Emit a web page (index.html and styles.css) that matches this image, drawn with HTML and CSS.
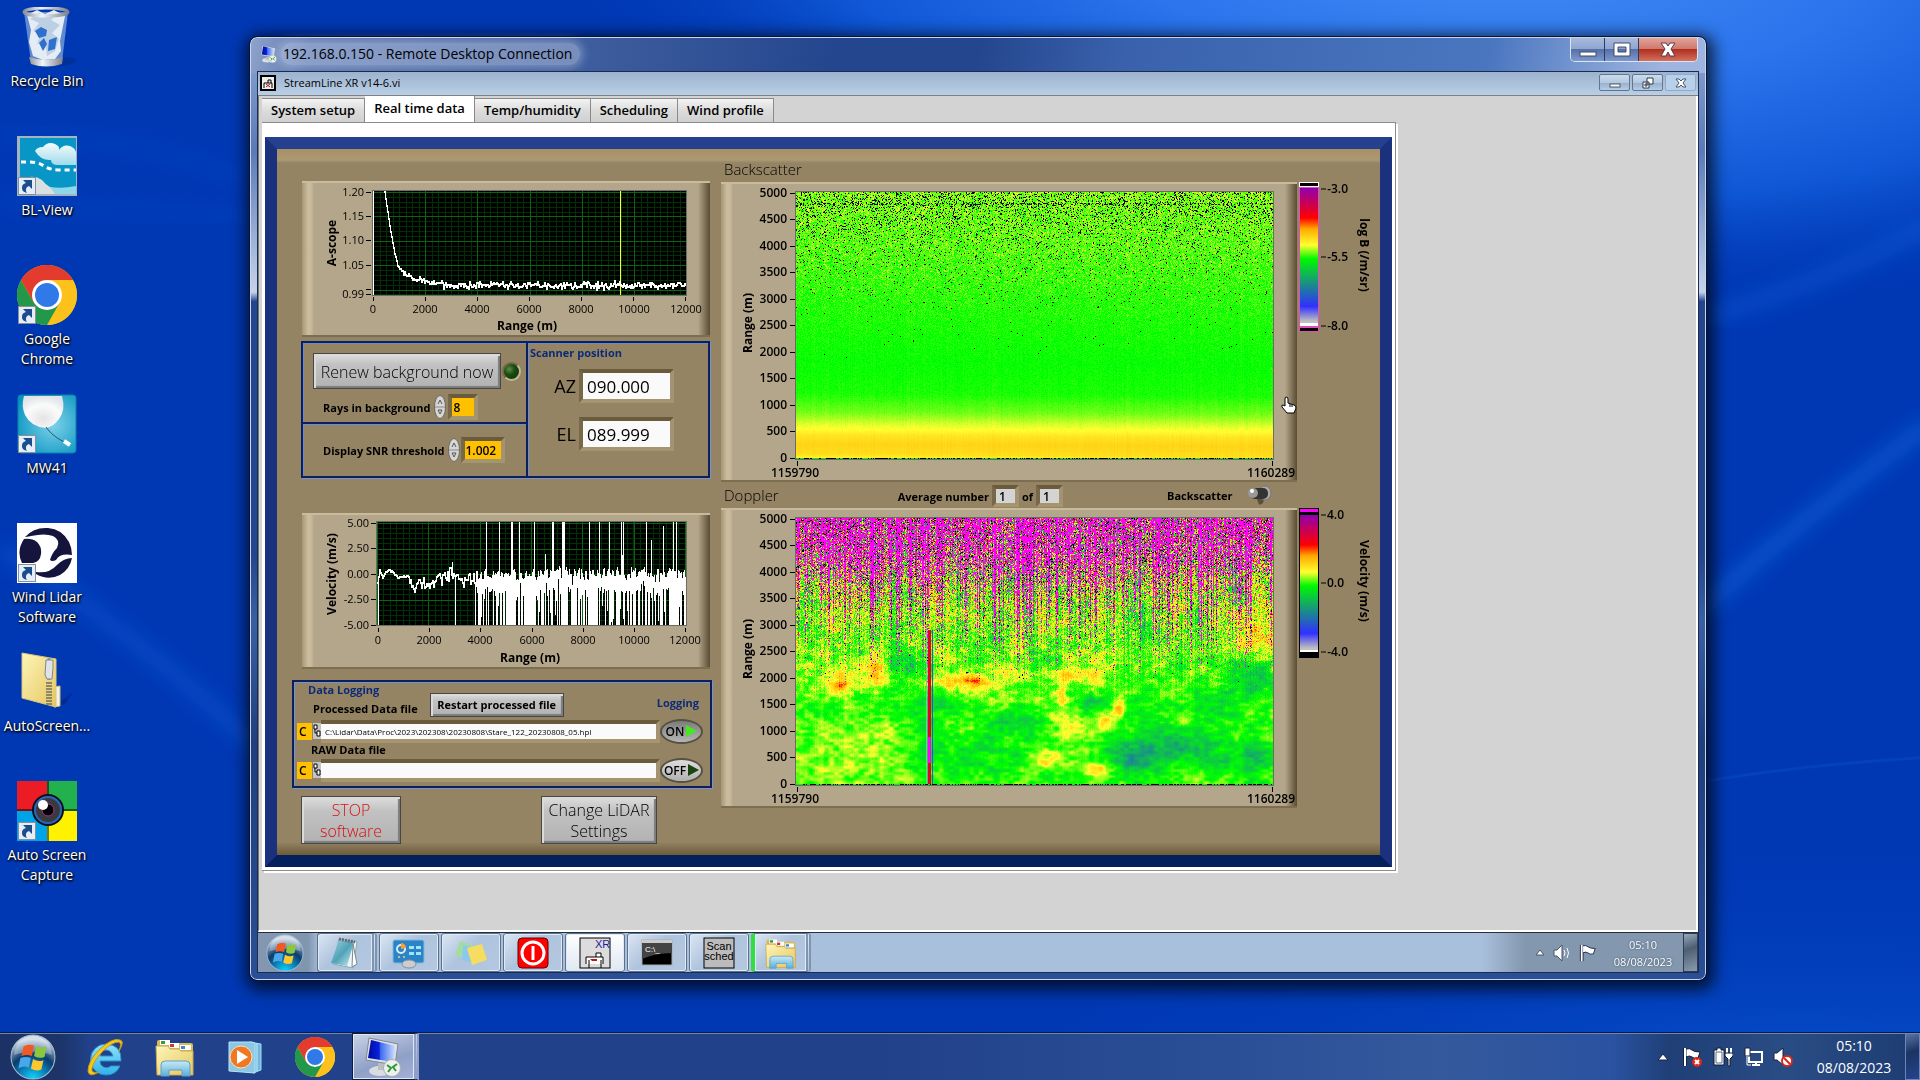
FILE: index.html
```html
<!DOCTYPE html>
<html lang="en">
<head>
    <meta charset="UTF-8">
    <meta name="viewport" content="width=device-width, initial-scale=1.0">
    <title>192.168.0.150 - Remote Desktop Connection</title>
    <link rel="stylesheet" href="styles.css">
</head>
<body>
    <!-- Shared icons -->
    <svg class="sprites" aria-hidden="true">
        <defs>
            <linearGradient id="gPaper" x1="0" y1="0" x2="1" y2="1"><stop offset="0" stop-color="#fdf6b8"/><stop offset="1" stop-color="#e6c660"/></linearGradient>
            <linearGradient id="gClip" x1="0" y1="0" x2="0" y2="1"><stop offset="0" stop-color="#c9e9f6"/><stop offset="1" stop-color="#5aaedb"/></linearGradient>
            <linearGradient id="gScreen" x1="0" y1="0" x2="1" y2="0"><stop offset="0" stop-color="#000a9c"/><stop offset="0.4" stop-color="#0a22e0"/><stop offset="0.45" stop-color="#3f6cf0"/><stop offset="1" stop-color="#d4e4fb"/></linearGradient>
            <radialGradient id="gOrb" cx="0.5" cy="1" r="0.9"><stop offset="0" stop-color="#12d6ff"/><stop offset="0.35" stop-color="#0b7fb8"/><stop offset="0.62" stop-color="#0a3c6e"/><stop offset="0.8" stop-color="#5b7b9b"/><stop offset="1" stop-color="#c3d3e2"/></radialGradient>
            <radialGradient id="gBalloon" cx="0.5" cy="0.7" r="0.7"><stop offset="0" stop-color="#e4e4e6"/><stop offset="0.6" stop-color="#fbfbfb"/><stop offset="1" stop-color="#dfe5e8"/></radialGradient>
            <radialGradient id="gMw" cx="0.6" cy="0.5" r="0.7"><stop offset="0" stop-color="#7fd2ea"/><stop offset="1" stop-color="#0894c0"/></radialGradient>
            <linearGradient id="gCloud" x1="0" y1="0" x2="0" y2="1"><stop offset="0" stop-color="#f4fcfd"/><stop offset="1" stop-color="#9fdbea"/></linearGradient>
            <linearGradient id="gMetal" x1="0" y1="0" x2="1" y2="0"><stop offset="0" stop-color="#8d9299"/><stop offset="0.4" stop-color="#f3f5f7"/><stop offset="1" stop-color="#7d828a"/></linearGradient>
            <linearGradient id="gPad" x1="0" y1="0" x2="1" y2="1"><stop offset="0" stop-color="#9fd3e0"/><stop offset="0.5" stop-color="#4fa3b8"/><stop offset="1" stop-color="#d5edf2"/></linearGradient>
            <linearGradient id="gE" x1="0" y1="0" x2="0" y2="1"><stop offset="0" stop-color="#8fe3fb"/><stop offset="1" stop-color="#2fb2ea"/></linearGradient>
        </defs>
        <symbol id="arrow" viewBox="0 0 18 18">
            <rect x="0.5" y="0.5" width="17" height="17" fill="#e3eef8" stroke="#8a9099"/>
            <path d="M5 3h9v9l-3-3c-3 1-4 4-2 7-4-1-5-3-5-5 0-3 1-4 4-5z" fill="#1c4c8c"/>
        </symbol>
        <symbol id="chrome" viewBox="0 0 60 60">
            <circle cx="30" cy="30" r="30" fill="#fbc116"/>
            <path d="M56 15H30L36 42 30 60A30 30 0 0 0 56 15z" fill="#fcc21b"/>
            <path d="M4 15A30 30 0 0 0 30 60L43 37 30 42 17 38z" fill="#23974a"/>
            <path d="M4 15L17 38 30 30V15H56A30 30 0 0 0 4 15z" fill="#e33b2e"/>
            <circle cx="30" cy="30" r="15" fill="#fff"/>
            <circle cx="30" cy="30" r="12" fill="#2f79e8"/>
        </symbol>
        <symbol id="orb" viewBox="0 0 44 44">
            <circle cx="22" cy="22" r="21" fill="url(#gOrb)" stroke="#a9bdd2"/>
            <path d="M4 20a18 18 0 0 1 36 0c-10-4-24-4-36 0z" fill="#fff" opacity="0.3"/>
            <path d="M13 12q4-3 10-1l-2 10q-5-2-10 0z" fill="#f05a22"/>
            <path d="M25 12q5 2 10 0l-2 10q-5 2-10-1z" fill="#8cc83c"/>
            <path d="M10 23q5-2 10 0l-2 9q-5-2-10 1z" fill="#4aa8e8"/>
            <path d="M22 24q5 3 10 1l-2 9q-5 2-10-1z" fill="#fcc82c"/>
        </symbol>
        <symbol id="explorer" viewBox="0 0 40 40">
            <path d="M2 5q0-2 2-2h8l2 3h22q2 0 2 2v6H2z" fill="#d9b95a"/>
            <path d="M5 3h10v5H5zM14 6h10v5H14zM25 8h11v5H25z" fill="#fff"/>
            <path d="M6 4h4v3H6z" fill="#3a9a3a"/><path d="M15 7h4v3h-4z" fill="#d03a2a"/><path d="M26 9h4v3h-4z" fill="#3a8ad0"/>
            <path d="M1 9h12l2 3h9l2 2h12v24H2z" fill="url(#gPaper)" stroke="#c9a850"/>
            <path d="M6 39V28q0-4 4-4h21q4 0 4 4v11h-8v-6H14v6z" fill="url(#gClip)" stroke="#5da2c6"/>
        </symbol>
        <symbol id="rdp" viewBox="0 0 40 40">
            <ellipse cx="16" cy="34" rx="11" ry="5" fill="#d9dce0"/>
            <path d="M14 26h6v7h-6z" fill="#b9bec6"/>
            <path d="M5 1l29 6-3 21L2 23z" fill="#dfe3e8" stroke="#7f868f"/>
            <path d="M7 3l25 6-3 16L4 21z" fill="url(#gScreen)"/>
            <circle cx="28" cy="31" r="8.500" fill="#eef1ef" stroke="#a9b0ab"/>
            <path d="M23 28l4 3-3 4M33 27l-4 3 3 4" stroke="#2f9a34" stroke-width="2" fill="none"/>
        </symbol>
        <symbol id="flag" viewBox="0 0 18 20">
            <path d="M2 1v18" stroke="#14233f" stroke-width="4"/>
            <path d="M3 2q4-1 6 1t8 2l-2 6q-4 1-6-1t-6 0z" fill="#fff" stroke="#14233f"/>
            <path d="M2 1v18" stroke="#fff" stroke-width="2"/>
        </symbol>
        <symbol id="spin" viewBox="0 0 12 24">
            <ellipse cx="6" cy="12" rx="5.500" ry="11.500" fill="#d6d6d6" stroke="#6f6a60"/>
            <path d="M1 12h10" stroke="#8a8a8a"/>
            <path d="M4 9l2-4 2 4M4 15h4l-2 4z" fill="none" stroke="#555"/>
        </symbol>
        <symbol id="path" viewBox="0 0 8 16">
            <rect width="8" height="16" fill="#c4c4c4"/>
            <path d="M1 2h3v4H1zM4 8h3v5H4zM2 6v4h2" fill="#fff" stroke="#000"/>
        </symbol>
    </svg>

    <main class="desktop">
        <svg class="wallpaper" viewBox="0 0 1920 1080" preserveAspectRatio="none" aria-hidden="true">
            <defs>
                <radialGradient id="wTop" gradientUnits="userSpaceOnUse" cx="0" cy="0" r="1" gradientTransform="translate(1480 -70) rotate(4) scale(980 380)">
                    <stop offset="0" stop-color="#4590f8"/><stop offset="0.4" stop-color="#2b74ec"/><stop offset="0.7" stop-color="#0f57d6"/><stop offset="1" stop-color="#0038b4" stop-opacity="0"/>
                </radialGradient>
                <radialGradient id="wBottom" gradientUnits="userSpaceOnUse" cx="0" cy="0" r="1" gradientTransform="translate(1800 1150) scale(900 330)">
                    <stop offset="0" stop-color="#0a5ad8"/><stop offset="1" stop-color="#0038b4" stop-opacity="0"/>
                </radialGradient>
                <filter id="soft"><feGaussianBlur stdDeviation="9"/></filter>
            </defs>
            <rect width="1920" height="1080" fill="#0038b4"/>
            <rect width="1920" height="1080" fill="url(#wTop)"/>
            <rect width="1920" height="1080" fill="url(#wBottom)"/>
            <path d="M0 550Q120 620 260 750" fill="none" stroke="#0a58d4" stroke-width="16" opacity="0.5" filter="url(#soft)"/>
            <path d="M0 134Q130 136 250 180M0 200Q120 215 260 215" fill="none" stroke="#0a52d0" stroke-width="10" opacity="0.3" filter="url(#soft)"/>
            <path d="M1700 610Q1800 520 1930 424" fill="none" stroke="#0a60d8" stroke-width="18" opacity="0.6" filter="url(#soft)"/>
            <path d="M1700 318Q1810 290 1930 225" fill="none" stroke="#0a5cd8" stroke-width="20" opacity="0.4" filter="url(#soft)"/>
            <path d="M1700 782Q1800 765 1930 757" fill="none" stroke="#0c58d0" stroke-width="3" opacity="0.3"/>
        </svg>

        <nav class="icons">
            <a class="icon" href="#">
                <svg width="60" height="60" viewBox="0 0 60 60">
                    <path d="M46 50q10 0 14 3-4 6-18 6z" fill="#002a80" opacity="0.5"/>
                    <path d="M7 5h44l-6 50q-16 6-31 0z" fill="#7fa6dc" opacity="0.75"/>
                    <path d="M10 8l10-5 8 4 9-4 11 6-2 10-3 15 1 10-6 8-12 1-10-4-4-14 2-12z" fill="#e4edf6"/>
                    <path d="M13 12l9 4-6 8 8 3-4 10 8-2 2 14 8-5 4-12-7-6 8-8-9-5 6-6-12 3-6-4z" fill="#bccfe3"/>
                    <path d="M18 24l6-4 6 3-1 6-7 2zM22 36l5-5 3 6-4 7zM32 33l8-3-2 12-7 2z" fill="#2e6fd0"/>
                    <path d="M12 50q16 6 34 0l-1 7q-16 5-31 0z" fill="url(#gMetal)"/>
                    <ellipse cx="29" cy="5" rx="22" ry="4" fill="none" stroke="url(#gMetal)" stroke-width="3"/>
                </svg>
                <span>Recycle Bin</span>
            </a>
            <a class="icon" href="#">
                <svg width="60" height="60" viewBox="0 0 60 60">
                    <rect width="60" height="60" fill="#a4b4c0"/>
                    <rect x="3" y="2" width="56" height="56" fill="#0796c6"/>
                    <path d="M18 15q2-4 8-4 5-6 12-3 5 2 4 6 4-6 11-4 5 2 6 6v13H41q-7 0-7-5-10 1-16-9z" fill="url(#gCloud)"/>
                    <path d="M4 26h9q8 0 14 4t16 4h16" stroke="#fff" stroke-width="3" stroke-dasharray="5 4" fill="none"/>
                    <path d="M3 45q12-8 22-1 7 9 16 9v5H3z" fill="#dadfe2"/>
                    <path d="M33 51q12 2 26-1v8H38z" fill="#8fd6e8"/>
                    <use href="#arrow" x="1" y="41" width="18" height="18"/>
                </svg>
                <span>BL-View</span>
            </a>
            <a class="icon" href="#">
                <svg width="60" height="60" viewBox="0 0 60 60">
                    <use href="#chrome" width="60" height="60"/>
                    <use href="#arrow" x="1" y="41" width="18" height="18"/>
                </svg>
                <span>Google<br>Chrome</span>
            </a>
            <a class="icon" href="#">
                <svg width="60" height="60" viewBox="0 0 60 60">
                    <rect x="1" y="1" width="58" height="58" rx="3" fill="url(#gMw)" stroke="#0784ac"/>
                    <path d="M7 2h38q4 14-3 23-6 8-13 9-15-1-21-13-4-9-1-19z" fill="url(#gBalloon)"/>
                    <path d="M29 33q5 8 18 15" stroke="#2a5a70" fill="none"/>
                    <path d="M47 47l6 4" stroke="#fff" stroke-width="4"/>
                    <use href="#arrow" x="1" y="41" width="18" height="18"/>
                </svg>
                <span>MW41</span>
            </a>
            <a class="icon" href="#">
                <svg width="60" height="60" viewBox="0 0 60 60">
                    <rect width="60" height="60" fill="#fff"/>
                    <path d="M8 14Q17 4 31 5q14 1 21 14 3 6 3 13-12-2-16 5-4 2-6 0 2-7 7-12 4-8-4-12-8-3-22 0-5 1-6 1z" fill="#14143c"/>
                    <path d="M7 16q8-1 13 3 5 5 4 12-1 8-8 9H5Q-1 28 7 16z" fill="#14143c"/>
                    <path d="M19 49q13 2 21-7 7-7 15-7-2 11-12 17-12 6-24-1z" fill="#14143c"/>
                    <use href="#arrow" x="1" y="41" width="18" height="18"/>
                </svg>
                <span>Wind Lidar<br>Software</span>
            </a>
            <a class="icon" href="#">
                <svg width="60" height="60" viewBox="0 0 60 60">
                    <path d="M38 54l18-14-8 12z" fill="#00247c" opacity="0.6"/>
                    <path d="M36 35l7-1v20l-6 1z" fill="#f0f2f4" stroke="#d8b858"/>
                    <path d="M5 1l34 6v48L5 46z" fill="url(#gPaper)" stroke="#d9c47a"/>
                    <path d="M32 30v24" stroke="#8d8668" stroke-width="6" stroke-dasharray="2 1"/>
                    <path d="M32 6v22" stroke="#8f959c" stroke-width="3"/>
                    <path d="M29 8h7v8l-1 11h-5l-2-4z" fill="#dfe3e7" stroke="#80868c"/>
                </svg>
                <span>AutoScreen...</span>
            </a>
            <a class="icon" href="#">
                <svg width="60" height="60" viewBox="0 0 60 60">
                    <rect width="30" height="30" fill="#ec1c24"/><rect x="30" width="30" height="30" fill="#22b14c"/>
                    <rect y="30" width="30" height="30" fill="#00a2e8"/><rect x="30" y="30" width="30" height="30" fill="#fff200"/>
                    <path d="M31 0v60M0 29h60" stroke="#000"/>
                    <circle cx="31" cy="29" r="15" fill="#3a3a3e" stroke="#081020" stroke-width="2"/>
                    <circle cx="31" cy="29" r="13" fill="none" stroke="#2a66b8" stroke-width="2"/>
                    <circle cx="31" cy="29" r="6" fill="#000" stroke="#a0308c"/>
                    <circle cx="26" cy="24" r="5" fill="#fff"/>
                    <use href="#arrow" x="1" y="41" width="18" height="18"/>
                </svg>
                <span>Auto Screen<br>Capture</span>
            </a>
        </nav>

        <section class="window">
            <header class="titlebar">
                <svg width="18" height="20" viewBox="0 0 40 40"><use href="#rdp"/></svg>
                <h1>192.168.0.150 - Remote Desktop Connection</h1>
                <div class="win-buttons">
                    <button aria-label="Minimize"><svg width="18" height="16" viewBox="0 0 18 16"><rect x="1" y="10" width="16" height="4" fill="#fff" stroke="#3e4c68"/></svg></button>
                    <button aria-label="Maximize"><svg width="18" height="16" viewBox="0 0 18 16"><path d="M1 1h16v13H1zM5 5v5h8V5z" fill="#fff" fill-rule="evenodd" stroke="#3e4c68"/></svg></button>
                    <button class="close" aria-label="Close"><svg width="18" height="16" viewBox="0 0 18 16"><path d="M2 1h5l2 3 2-3h5l-4 6 4 7h-5l-2-4-2 4H2l4-7z" fill="#fff" stroke="#5a3a48"/></svg></button>
                </div>
            </header>

            <div class="client">
                <div class="vi-bar">
                    <svg width="16" height="16" viewBox="0 0 16 16"><path d="M1 1h14v14H1z" fill="#eee" stroke="#000" stroke-width="2"/><path d="M4 13V8h8v5M8 8V5h3v3" fill="none" stroke="#000"/><path d="M6 12l4-3M6 9l4 3" stroke="#c01818"/></svg>
                    <h2>StreamLine XR v14-6.vi</h2>
                    <button aria-label="Minimize panel"><svg width="12" height="12" viewBox="0 0 12 12"><rect x="1" y="7" width="10" height="3" fill="#fff" stroke="#4a5664"/></svg></button>
                    <button aria-label="Restore panel"><svg width="12" height="12" viewBox="0 0 12 12"><path d="M5 1h6v6H5zM1 5h6v6H1z" fill="#fff" stroke="#2f3a48"/><path d="M3 7h2v2H3z" fill="none" stroke="#2f3a48"/></svg></button>
                    <button aria-label="Close panel"><svg width="12" height="12" viewBox="0 0 12 12"><path d="M1 2h3l2 2 2-2h3L8 6l3 4H8L6 8l-2 2H1l3-4z" fill="#fff" stroke="#4a5664"/></svg></button>
                </div>

                <div class="workspace">
                    <div class="tabs" role="tablist">
                        <button role="tab">System setup</button>
                        <button role="tab" class="active" aria-selected="true">Real time data</button>
                        <button role="tab">Temp/humidity</button>
                        <button role="tab">Scheduling</button>
                        <button role="tab">Wind profile</button>
                    </div>

                    <div class="page">
                        <div class="panel">
                            <div class="left">
                                <figure class="plot scope">
                                    <canvas id="ascope" width="313" height="104"></canvas>
                                    <svg viewBox="0 0 408 156" class="axes thin">
                                        <g class="y">
                                            <text x="62" y="15">1.20</text><text x="62" y="39">1.15</text><text x="62" y="63">1.10</text><text x="62" y="88">1.05</text><text x="62" y="117">0.99</text>
                                        </g>
                                        <g class="x">
                                            <text x="71" y="132">0</text><text x="123" y="132">2000</text><text x="175" y="132">4000</text><text x="227" y="132">6000</text><text x="279" y="132">8000</text><text x="332" y="132">10000</text><text x="384" y="132">12000</text>
                                        </g>
                                        <path d="M64 11h5M64 35h5M64 59h5M64 84h5M64 108h5M64 113h5M71 116v4M123 116v4M175 116v4M227 116v4M279 116v4M331 116v4M383 116v4"/>
                                        <text class="name" x="225" y="149">Range (m)</text>
                                        <text class="name" transform="translate(34 62) rotate(-90)">A-scope</text>
                                    </svg>
                                </figure>

                                <div class="controls">
                                    <div class="cell background">
                                        <div class="row">
                                            <button class="btn big">Renew background now</button>
                                            <span class="led"></span>
                                        </div>
                                        <div class="row field">
                                            <label for="rays">Rays in background</label>
                                            <button class="spin" aria-label="Change rays"><svg width="12" height="24"><use href="#spin"/></svg></button>
                                            <input id="rays" class="amber short" value="8">
                                        </div>
                                    </div>
                                    <div class="cell snr">
                                        <div class="row field">
                                            <label for="snr">Display SNR threshold</label>
                                            <button class="spin" aria-label="Change threshold"><svg width="12" height="24"><use href="#spin"/></svg></button>
                                            <input id="snr" class="amber" value="1.002">
                                        </div>
                                    </div>
                                    <div class="cell scanner">
                                        <h3>Scanner position</h3>
                                        <div class="angle"><label for="az">AZ</label><input id="az" value="090.000" readonly></div>
                                        <div class="angle"><label for="el">EL</label><input id="el" value="089.999" readonly></div>
                                    </div>
                                </div>

                                <figure class="plot scope">
                                    <canvas id="velocity" class="velocity" width="309" height="103"></canvas>
                                    <svg viewBox="0 0 408 156" class="axes thin">
                                        <g class="y">
                                            <text x="67" y="14">5.00</text><text x="67" y="39">2.50</text><text x="67" y="65">0.00</text><text x="67" y="90">-2.50</text><text x="67" y="116">-5.00</text>
                                        </g>
                                        <g class="x">
                                            <text x="76" y="131">0</text><text x="127" y="131">2000</text><text x="178" y="131">4000</text><text x="230" y="131">6000</text><text x="281" y="131">8000</text><text x="332" y="131">10000</text><text x="383" y="131">12000</text>
                                        </g>
                                        <path d="M69 10h5M69 35h5M69 61h5M69 86h5M69 112h5M76 115v4M127 115v4M178 115v4M230 115v4M281 115v4M332 115v4M383 115v4"/>
                                        <text class="name" x="228" y="149">Range (m)</text>
                                        <text class="name" transform="translate(34 61) rotate(-90)">Velocity (m/s)</text>
                                    </svg>
                                </figure>

                                <div class="logging">
                                    <h3>Data Logging</h3>
                                    <div class="log-head">
                                        <label for="proc">Processed Data file</label>
                                        <button class="btn restart">Restart processed file</button>
                                        <h3>Logging</h3>
                                    </div>
                                    <div class="log-row">
                                        <span class="drive">C</span>
                                        <svg width="8" height="16"><use href="#path"/></svg>
                                        <input id="proc" value="C:\Lidar\Data\Proc\2023\202308\20230808\Stare_122_20230808_05.hpl">
                                        <button class="toggle on">ON<i></i></button>
                                    </div>
                                    <label class="raw" for="raw">RAW Data file</label>
                                    <div class="log-row">
                                        <span class="drive">C</span>
                                        <svg width="8" height="16"><use href="#path"/></svg>
                                        <input id="raw" value="">
                                        <button class="toggle">OFF<i></i></button>
                                    </div>
                                </div>

                                <div class="actions">
                                    <button class="btn big stop">STOP<br>software</button>
                                    <button class="btn big settings">Change LiDAR<br>Settings</button>
                                </div>
                            </div>

                            <div class="right">
                                <div class="caption"><h2>Backscatter</h2></div>
                                <div class="map-row">
                                    <figure class="plot map">
                                        <canvas id="backscatter" width="477" height="267"></canvas>
                                        <svg viewBox="0 0 576 300" class="axes">
                                            <g class="y">
                                                <text x="66" y="15">5000</text><text x="66" y="41">4500</text><text x="66" y="68">4000</text><text x="66" y="94">3500</text><text x="66" y="121">3000</text><text x="66" y="147">2500</text><text x="66" y="174">2000</text><text x="66" y="200">1500</text><text x="66" y="227">1000</text><text x="66" y="253">500</text><text x="66" y="280">0</text>
                                            </g>
                                            <g class="x"><text x="74" y="295">1159790</text><text x="550" y="295">1160289</text></g>
                                            <path d="M69 11h5M69 37h5M69 64h5M69 90h5M69 117h5M69 143h5M69 170h5M69 196h5M69 223h5M69 249h5M69 276h5M76 279v5M551 279v5"/>
                                            <text class="name" transform="translate(31 141) rotate(-90)">Range (m)</text>
                                        </svg>
                                    </figure>
                                    <svg class="scale" width="81" height="160" viewBox="0 0 81 160">
                                        <defs>
                                            <linearGradient id="ramp" x1="0" y1="0" x2="0" y2="1">
                                                <stop offset="0" stop-color="#9000b0"/><stop offset="0.220" stop-color="#ff0000"/><stop offset="0.300" stop-color="#ffa800"/><stop offset="0.420" stop-color="#ffff30"/><stop offset="0.520" stop-color="#00f800"/><stop offset="0.870" stop-color="#3030ff"/><stop offset="0.980" stop-color="#c0c0c0"/>
                                            </linearGradient>
                                        </defs>
                                        <rect width="20" height="150" fill="#e04fc0"/>
                                        <rect width="20" height="5" fill="#fff"/><rect x="1" y="1" width="18" height="3"/>
                                        <rect x="1" y="6" width="18" height="136" fill="url(#ramp)"/>
                                        <rect x="1" y="141" width="18" height="3" fill="#fff"/><rect x="1" y="146" width="18" height="3"/>
                                        <path d="M22 7h5M22 75h5M22 144h5" stroke="#000"/>
                                        <g class="ticks"><text x="49" y="11">-3.0</text><text x="49" y="79">-5.5</text><text x="49" y="148">-8.0</text></g>
                                        <text class="name" transform="translate(61 73) rotate(90)">log B (/m/sr)</text>
                                    </svg>
                                </div>

                                <div class="caption doppler">
                                    <h2>Doppler</h2>
                                    <div class="average">
                                        <label for="avg">Average number</label>
                                        <input id="avg" value="1" readonly>
                                        <label for="avgOf">of</label>
                                        <input id="avgOf" value="1" readonly>
                                    </div>
                                    <label for="mode">Backscatter</label>
                                    <button id="mode" class="lever" aria-label="Backscatter">
                                        <svg width="26" height="22" viewBox="0 0 26 22">
                                            <path d="M10 12h9l-2 7q-4 4-5-1z" fill="#5c5038"/>
                                            <ellipse cx="19" cy="9" rx="6" ry="7" fill="#a9a9a9" stroke="#777"/>
                                            <rect x="4" y="4" width="18" height="11" rx="5" fill="#333"/>
                                            <circle cx="7" cy="9" r="5" fill="#999"/><circle cx="6" cy="7" r="2" fill="#fff"/>
                                        </svg>
                                    </button>
                                </div>
                                <div class="map-row">
                                    <figure class="plot map">
                                        <canvas id="doppler" width="477" height="267"></canvas>
                                        <svg viewBox="0 0 576 300" class="axes">
                                            <g class="y">
                                                <text x="66" y="15">5000</text><text x="66" y="41">4500</text><text x="66" y="68">4000</text><text x="66" y="94">3500</text><text x="66" y="121">3000</text><text x="66" y="147">2500</text><text x="66" y="174">2000</text><text x="66" y="200">1500</text><text x="66" y="227">1000</text><text x="66" y="253">500</text><text x="66" y="280">0</text>
                                            </g>
                                            <g class="x"><text x="74" y="295">1159790</text><text x="550" y="295">1160289</text></g>
                                            <path d="M69 11h5M69 37h5M69 64h5M69 90h5M69 117h5M69 143h5M69 170h5M69 196h5M69 223h5M69 249h5M69 276h5M76 279v5M551 279v5"/>
                                            <text class="name" transform="translate(31 141) rotate(-90)">Range (m)</text>
                                        </svg>
                                    </figure>
                                    <svg class="scale" width="81" height="160" viewBox="0 0 81 160">
                                        <rect width="20" height="150"/>
                                        <rect x="1" y="1" width="18" height="3" fill="#ff00ff"/>
                                        <rect x="1" y="7" width="18" height="136" fill="url(#ramp)"/>
                                        <rect x="1" y="142" width="18" height="2" fill="#fff"/>
                                        <path d="M22 7h5M22 75h5M22 144h5" stroke="#000"/>
                                        <g class="ticks"><text x="45" y="11">4.0</text><text x="45" y="79">0.0</text><text x="49" y="148">-4.0</text></g>
                                        <text class="name" transform="translate(61 73) rotate(90)">Velocity (m/s)</text>
                                    </svg>
                                </div>
                            </div>
                        </div>
                    </div>
                </div>

                <footer class="remote-taskbar">
                    <button class="start" aria-label="Remote start"><svg width="38" height="38"><use href="#orb"/></svg></button>
                    <button class="task stacked" aria-label="Notepad">
                        <svg width="32" height="34" viewBox="0 0 32 34"><path d="M10 3l18 3-4 26-20-4z" fill="#eef4f6" stroke="#8aa"/><path d="M10 4l15 2-7 24L2 27z" fill="url(#gPad)"/><path d="M10 3l16 3" stroke="#667" stroke-width="3" stroke-dasharray="2 1"/><path d="M24 8l4 20-5 3z" fill="#fff" stroke="#7a8a90"/></svg>
                    </button>
                    <button class="task" aria-label="Control Panel">
                        <svg width="34" height="32" viewBox="0 0 34 32"><rect x="1" y="3" width="31" height="23" rx="2" fill="#2b83c8" stroke="#7fb8e0"/><circle cx="9" cy="12" r="4" fill="none" stroke="#d8eefc" stroke-width="2"/><path d="M9 12V6a5 5 0 0 1 5 5z" fill="#f6a030"/><path d="M17 9h5v3h-5zM24 9h5v3h-5zM17 15h5v3h-5zM24 15h5v3h-5z" fill="#9fe4f8"/><circle cx="7" cy="20" r="1" fill="#fc6"/><circle cx="12" cy="20" r="1" fill="#fc6"/><ellipse cx="17" cy="27" rx="7" ry="4" fill="#c9ced4" stroke="#8b9096"/></svg>
                    </button>
                    <button class="task" aria-label="Sticky Notes">
                        <svg width="34" height="32" viewBox="0 0 34 32"><path d="M6 4l15 5-5 14L1 18z" fill="#a4dca0"/><path d="M9 8l15 3-3 15-13-3z" fill="#8cc8ee"/><path d="M13 11l15-4 5 16-15 5z" fill="#f6dc60"/></svg>
                    </button>
                    <button class="task" aria-label="Power">
                        <svg width="32" height="32" viewBox="0 0 32 32"><rect x="1" y="1" width="30" height="30" rx="4" fill="#f00" stroke="#600"/><circle cx="16" cy="16" r="11" fill="none" stroke="#fff" stroke-width="3"/><path d="M16 9v14" stroke="#fff" stroke-width="3"/></svg>
                    </button>
                    <button class="task current" aria-label="StreamLine XR">
                        <svg width="32" height="32" viewBox="0 0 32 32"><rect x="1" y="1" width="30" height="30" fill="#dcdcdc" stroke="#000"/><text class="glyph xr" x="16" y="11">XR</text><path d="M7 27V20h17v7M10 31v-8M22 31v-8M17 20v-4h5v4" fill="#fff" stroke="#000"/><path d="M11 22h7v2h-5z" fill="#c01818"/></svg>
                    </button>
                    <button class="task" aria-label="Command Prompt">
                        <svg width="32" height="28" viewBox="0 0 32 28"><rect x="1" y="1" width="30" height="25" fill="#000" stroke="#aaa"/><path d="M1 1h30v3H1z" fill="#ccc"/><path d="M1 4h30v10Q14 14 1 20z" fill="#444"/><text class="glyph cmd" x="4" y="13">C:\_</text></svg>
                    </button>
                    <button class="task" aria-label="Scan scheduler">
                        <svg width="32" height="32" viewBox="0 0 32 32"><rect x="1" y="1" width="30" height="30" fill="#bcbcbc" stroke="#000"/><text class="glyph" x="16" y="13">Scan</text><text class="glyph" x="16" y="23">sched</text></svg>
                    </button>
                    <button class="task stacked busy" aria-label="Explorer"><svg width="32" height="32"><use href="#explorer"/></svg></button>
                    <div class="tray">
                        <svg width="10" height="6" viewBox="0 0 10 6"><path d="M5 0l4 5H1z" fill="#fff" stroke="#4a5a70"/></svg>
                        <svg width="18" height="18" viewBox="0 0 18 18"><path d="M1 6h3l5-5v16l-5-5H1z" fill="#fff" stroke="#44546a"/><path d="M11 6q2 3 0 6M14 4q3 5 0 10" fill="none" stroke="#fff"/></svg>
                        <svg width="18" height="18"><use href="#flag"/></svg>
                        <time class="clock">05:10<br>08/08/2023</time>
                        <button class="show" aria-label="Show remote desktop"></button>
                    </div>
                </footer>
            </div>

            <svg class="pointer" width="16" height="18" viewBox="0 0 16 18" aria-hidden="true"><path d="M5 1q2 0 2 2v4l6 2q2 1 2 3l-2 5H6L1 11q-1-2 1-2l2 1V3q0-2 1-2z" fill="#fff" stroke="#000"/><path d="M9 8v3M11 9v2" stroke="#000"/></svg>
        </section>
    </main>

    <footer class="taskbar">
        <button class="start" aria-label="Start"><svg width="46" height="46"><use href="#orb"/></svg></button>
        <button class="pin" aria-label="Internet Explorer">
            <svg width="40" height="40" viewBox="0 0 40 40"><path d="M21 7a15 15 0 0 0 0 31q10 0 14-9h-9q-5 4-10-1-1-2-1-4h21Q37 8 21 7zm-6 12q1-6 6-6t7 6z" fill="url(#gE)" stroke="#2a90cc" fill-rule="evenodd"/><path d="M34 14Q40 4 35 3 28 0 15 12 3 24 3 34q1 7 11 1-8 2-7-4 2-8 11-17T34 5q3 1 0 9z" fill="#f6c820" stroke="#c89a10"/></svg>
        </button>
        <button class="pin" aria-label="Windows Explorer"><svg width="40" height="40"><use href="#explorer"/></svg></button>
        <button class="pin" aria-label="Media Player">
            <svg width="36" height="36" viewBox="0 0 36 36"><path d="M22 3l12 2v26l-8 3z" fill="#6fb8dc" stroke="#9fdcf0"/><path d="M26 4v29M30 4v28" stroke="#c4ecf8"/><path d="M2 3h23l3 1v30L2 32z" fill="#8cc8e4" stroke="#b8e4f4"/><circle cx="14" cy="18" r="11" fill="#f07820" stroke="#f8e0c8"/><path d="M10 11l11 7-11 7z" fill="#fff"/></svg>
        </button>
        <button class="pin" aria-label="Google Chrome"><svg width="40" height="40"><use href="#chrome"/></svg></button>
        <button class="pin running" aria-label="Remote Desktop"><svg width="40" height="40"><use href="#rdp"/></svg></button>
        <div class="tray">
            <svg width="12" height="8" viewBox="0 0 12 8"><path d="M6 1l5 6H1z" fill="#fff" stroke="#14233f"/></svg>
            <svg width="20" height="20" viewBox="0 0 20 20"><use href="#flag" width="18" height="20"/><circle cx="14" cy="15" r="5" fill="#d8281c"/><path d="M12 13l4 4M16 13l-4 4" stroke="#fff" stroke-width="2"/></svg>
            <svg width="20" height="20" viewBox="0 0 20 20"><path d="M1 3h3V1h4v2h3v15H1z" fill="#fff" stroke="#0c1a34"/><path d="M3 5h6v11H3z" fill="#fff" stroke="#5a6a84"/><path d="M14 1v5M18 1v5" stroke="#fff" stroke-width="2"/><path d="M12 6h8v3l-3 3v7h-2v-7l-3-3z" fill="#fff" stroke="#0c1a34"/></svg>
            <svg width="20" height="20" viewBox="0 0 20 20"><path d="M6 5h13v10H6z" fill="#2a4a80" stroke="#fff" stroke-width="2"/><path d="M9 18h8M13 15v3" stroke="#fff" stroke-width="2"/><path d="M2 1h5v8H2z" fill="#fff" stroke="#14233f"/><path d="M4 9v9h4" stroke="#fff" fill="none"/></svg>
            <svg width="20" height="20" viewBox="0 0 20 20"><path d="M1 6h3l6-5v17l-6-5H1z" fill="#fff" stroke="#14233f"/><circle cx="14" cy="14" r="5" fill="#fff" stroke="#d8281c" stroke-width="2"/><path d="M11 11l6 6" stroke="#d8281c" stroke-width="2"/></svg>
            <time class="clock">05:10<br>08/08/2023</time>
            <button class="show" aria-label="Show desktop"></button>
        </div>
    </footer>

    <script src="script.js"></script>
</body>
</html>
```

FILE: styles.css
```css
* {
    box-sizing: border-box;
}

body {
    margin: 0;
    height: 100vh;
    display: flex;
    flex-direction: column;
    overflow: hidden;
    background: #0038b4;
    font-family: 'Open Sans', 'Noto Sans', sans-serif;
    font-size: 12px;
    color: #000;
}

h1, h2, h3, figure {
    margin: 0;
    font-weight: normal;
}

button, input {
    font: inherit;
    color: inherit;
    margin: 0;
    padding: 0;
    border: none;
    background: none;
    border-radius: 0;
}

button {
    display: flex;
    align-items: center;
    justify-content: center;
}

svg {
    display: block;
    flex: none;
}

.sprites {
    position: absolute;
    width: 0;
    height: 0;
}

.desktop {
    position: relative;
    flex: 1;
    min-height: 0;
}

.wallpaper {
    position: absolute;
    width: 100%;
    height: 100vh;
}

/* Desktop shortcuts */
.icons {
    position: relative;
    width: 94px;
    padding-top: 7px;
    display: grid;
    grid-auto-rows: 129px;
}

.icon {
    display: flex;
    flex-direction: column;
    align-items: center;
    gap: 4px;
    color: #fff;
    font-size: 14px;
    line-height: 20px;
    text-align: center;
    text-decoration: none;
    text-shadow: 1px 1px 2px #000, 0 1px 3px #000;
}

/* Remote desktop window */
.window {
    position: absolute;
    top: 37px;
    right: 214px;
    bottom: 52px;
    left: 250px;
    display: flex;
    flex-direction: column;
    padding: 0 7px 7px;
    border: 1px solid #c4d6f2;
    border-radius: 7px;
    outline: 1px solid #0a1430;
    background:
        linear-gradient(100deg, #8fa3cb 0, #5b78b0 60px, #24468e 40%, #24468e 50%, #3a62ac 60%, #4a76c0 85%, #9fb4de 97%) top / 100% 35px no-repeat,
        linear-gradient(#8fa6d4, #5a7ab8 12%, #c6d2ea 27%, #24468e 28%, #24468e 55%, #3a60a4 62%, #1f3f7e 75%, #2b4f96);
    box-shadow: 2px 4px 16px 6px rgba(0, 0, 0, 0.7);
}

.titlebar {
    height: 34px;
    display: flex;
    align-items: flex-start;
    padding-left: 2px;
    gap: 3px;
}

.titlebar > svg {
    margin-top: 6px;
}

.titlebar h1 {
    flex: none;
    margin: 5px auto 0 0;
    padding: 0 8px 0 2px;
    font-size: 14px;
    line-height: 22px;
    border-radius: 11px;
    background: rgba(225, 232, 245, 0.35);
    box-shadow: 0 0 8px 3px rgba(225, 232, 245, 0.35);
}

.win-buttons {
    display: flex;
    height: 24px;
    border: 1px solid #dbe5f6;
    border-top: none;
    border-radius: 0 0 5px 5px;
    overflow: hidden;
}

.win-buttons button {
    width: 34px;
    border-right: 1px solid #2a3c64;
    background: linear-gradient(#a9badc, #8ea5d0 48%, #5571a8 50%, #7d98cc);
}

.win-buttons .close {
    width: 58px;
    border: none;
    background: linear-gradient(#e0a49c, #d0776a 48%, #b03020 50%, #d4705c);
}

.client {
    flex: 1;
    min-height: 0;
    display: flex;
    flex-direction: column;
    outline: 1px solid #1a2c50;
    background: #d3d3d3;
}

.vi-bar {
    height: 24px;
    display: flex;
    align-items: center;
    gap: 2px;
    padding: 0 2px 2px;
    background: linear-gradient(#9db3cd, #b9cfe8);
    border-bottom: 1px solid #808080;
}

.vi-bar h2 {
    margin: 0 auto 0 6px;
    font-size: 11px;
}

.vi-bar button {
    width: 31px;
    height: 17px;
    border: 1px solid #64768c;
    border-radius: 2px;
    background: linear-gradient(#cbdcee, #b4c9e0 50%, #98b0cc 52%, #b4cce6);
}

.vi-bar button:last-child {
    border-color: #93aac6;
    background: #b8d0ea;
}

.workspace {
    flex: 1;
    min-height: 0;
    overflow: hidden;
    padding-left: 3px;
    border-left: 1px solid #777;
    border-right: 2px solid #fff;
    border-bottom: 2px solid #fff;
}

.tabs {
    display: flex;
    height: 26px;
    align-items: flex-end;
}

.tabs button {
    height: 24px;
    padding: 0 9px 2px;
    font-size: 13px;
    font-weight: 600;
    border: 1px solid #8a8a8a;
    border-left: none;
    border-bottom: none;
    background: linear-gradient(#f3f3f3, #dcdcdc 50%, #d0d0d0);
}

.tabs .active {
    height: 26px;
    padding-bottom: 3px;
    background: #fff;
    border-top: none;
}

.page {
    width: fit-content;
    padding: 14px 3px 3px;
    background: #fff;
    border: 1px solid #8c8c8c;
    border-left: none;
    box-shadow: 2px 2px 0 #fff;
}

/* Front panel */
.panel {
    display: flex;
    gap: 9px;
    padding: 0 0 11px 15px;
    border-style: solid;
    border-width: 12px;
    border-color: #24408e #1a327e #04205c #1a327e;
    background: linear-gradient(#a98f68 0, #ab9972 11px, #948464 14px, #948464 calc(100% - 13px), #6c5a38);
}

.left {
    width: 420px;
    padding-top: 32px;
    display: flex;
    flex-direction: column;
}

.plot {
    display: grid;
    background:
        linear-gradient(90deg, #a49676 0, #cabc9c 6px, #c8ba9a 9px, transparent 12px) no-repeat,
        linear-gradient(270deg, #594d36 0, #6f6248 3px, transparent 12px) no-repeat,
        #b4a68a;
    border-top: 2px solid #c9bb9b;
    border-bottom: 2px solid #7c6e50;
}

.plot canvas {
    grid-area: 1 / 1;
    outline: 1px solid #6c6c60;
}

.axes {
    grid-area: 1 / 1;
    width: 100%;
    font-size: 12px;
    font-weight: 600;
}

.axes path {
    stroke: #000;
    shape-rendering: crispEdges;
}

.axes .y, .scale .ticks {
    text-anchor: end;
}

.axes .x, .name {
    text-anchor: middle;
}

.thin {
    font-size: 11px;
    font-weight: normal;
}

.name {
    font-size: 12px;
    font-weight: bold;
}

.scope {
    height: 156px;
    margin: 0 2px 0 10px;
}

.scope .axes {
    margin-top: -2px;
}

.scope canvas {
    margin: 8px 0 0 71px;
}

.scope .velocity {
    margin-top: 7px;
    margin-left: 75px;
}

.controls {
    margin: 4px 2px 35px 9px;
    display: grid;
    grid-template: 81px 54px / 225px 1fr;
    border: 1px solid #0a1f60;
    box-shadow: 1px 1px 0 #7c93c4;
}

.cell {
    border: 1px solid #0a1f60;
    box-shadow: inset 1px 1px 0 #6f8cc8;
}

.background {
    padding: 10px 0 0 10px;
}

.scanner {
    grid-area: 1 / 2 / 3 / 3;
    padding-left: 2px;
}

.row {
    display: flex;
    align-items: center;
}

.field {
    margin: 5px 0 0 10px;
    gap: 4px;
}

.snr .field {
    margin: 13px 0 0 20px;
    gap: 3px;
}

label, .restart {
    font-weight: bold;
    font-size: 11px;
}

h3 {
    color: #0c2a78;
    font-weight: bold;
    font-size: 11px;
    line-height: 17px;
}

.btn {
    border: 1px solid #474747;
    background: linear-gradient(#dedede, #c2c2c2 30%, #b2b2b2);
    box-shadow: inset 2px 2px 0 #dadada, inset -2px -2px 1px #7c7c7c;
    white-space: nowrap;
}

.big {
    height: 36px;
    width: 188px;
    padding-top: 2px;
    font-size: 16px;
    line-height: 21px;
    font-weight: 300;
}

.led {
    width: 19px;
    height: 19px;
    margin-left: 1px;
    border: 2px solid #75674a;
    border-right-color: #c4b595;
    border-bottom-color: #c4b595;
    border-radius: 50%;
    background: radial-gradient(circle at 35% 35%, #5c8c4c, #184c10 40%, #0c3008);
}

.amber, .angle input, .average input, .log-row input {
    border: 4px solid;
    border-color: #6a5b3d #a39372 #a6966f #77684a;
}

.amber {
    width: 44px;
    height: 26px;
    margin-left: -2px;
    padding-left: 1px;
    background: #ffc000 padding-box;
    font-weight: 600;
}

.short {
    width: 30px;
}

.angle {
    display: grid;
    grid-template-columns: 46px 95px;
    align-items: center;
    gap: 3px;
    margin-bottom: 14px;
}

.angle label {
    font-size: 18px;
    font-weight: normal;
    text-align: right;
}

.angle input {
    height: 34px;
    padding-left: 4px;
    background: #fafafa padding-box;
    font-size: 17px;
}

.scanner h3 {
    margin: 1px 0 8px;
}

.logging {
    margin-top: 11px;
    height: 108px;
    padding-left: 2px;
    border: 2px solid #0a1f60;
    box-shadow: inset 1px 1px 0 #7c93c4, 1px 1px 0 #7c93c4;
}

.logging > h3 {
    padding-left: 12px;
    line-height: 15px;
}

.log-head {
    display: flex;
    align-items: center;
    height: 23px;
    padding-left: 17px;
}

.restart {
    width: 134px;
    height: 24px;
    margin: -8px auto 0 12px;
}

.log-head h3 {
    padding: 0 11px 12px 0;
}

.log-row {
    display: flex;
    align-items: center;
    height: 22px;
}

.log-row .drive {
    width: 15px;
    height: 17px;
    margin: 0 1px 0 1px;
    padding-left: 2px;
    line-height: 17px;
    font-weight: 600;
    background: #ffc000;
}

.log-row input {
    flex: 1;
    min-width: 0;
    height: 23px;
    padding-left: 4px;
    border-left: none;
    background: #fafafa padding-box;
    font-size: 8px;
}

.toggle {
    width: 43px;
    height: 25px;
    margin: 0 7px 0 0;
    gap: 2px;
    border: 2px solid #55503f;
    border-radius: 50%;
    background: linear-gradient(#dedede, #b0b0b0);
    font-weight: 600;
}

.toggle.on {
    background: linear-gradient(#7c7c7c, #b4b4b4);
}

.toggle i {
    border-left: 11px solid #1c4410;
    border-top: 6px solid transparent;
    border-bottom: 6px solid transparent;
}

.toggle.on i {
    border-left-color: #48e820;
}

.raw {
    display: block;
    height: 17px;
    line-height: 16px;
    padding-left: 15px;
}

.actions {
    display: flex;
    gap: 140px;
    padding: 8px 0 0 9px;
}

.actions .big {
    height: 48px;
    width: 116px;
}

.actions .stop {
    width: 100px;
    color: #d81010;
}

.right {
    padding-top: 10px;
}

.caption {
    display: flex;
    align-items: flex-start;
    height: 23px;
}

.caption h2 {
    padding-left: 3px;
    font-size: 15px;
    font-weight: 300;
    line-height: 20px;
}

.doppler {
    height: 26px;
    align-items: center;
}

.average {
    display: flex;
    align-items: center;
    gap: 3px;
    margin: 2px 104px 0 119px;
}

.average input {
    width: 27px;
    height: 22px;
    padding-left: 3px;
    background: #d4d4d4 padding-box;
    font-weight: 600;
}

.lever {
    margin-left: 14px;
}

.map-row {
    display: flex;
    gap: 2px;
}

.map {
    width: 576px;
    height: 300px;
}

.map canvas {
    margin: 8px 0 0 75px;
}

.map .axes {
    margin-top: -2px;
}

.scale {
    overflow: visible;
    font-size: 12px;
    font-weight: 600;
}

/* Remote taskbar */
.remote-taskbar {
    height: 40px;
    display: flex;
    gap: 2px;
    border-top: 1px solid #24303e;
    background: linear-gradient(90deg, #8398b0 0, #8095ae 50px, #a9c0dc 62px, #a9c0dc 85%, #8397ae 88%, #8397ae);
}

.remote-taskbar .start {
    width: 57px;
    padding-right: 4px;
}

.task {
    width: 60px;
    border: 1px solid #5c718c;
    border-radius: 3px;
    box-shadow: inset 0 0 0 1px #dfeaf6;
    background: linear-gradient(135deg, #dbe6f3, #aec3dd 45%, #b4c8e0);
}

.stacked {
    border-right: 5px double #7f94ae;
}

.current {
    background: linear-gradient(#fff, #dfe8f3);
}

.busy {
    border-left: 4px solid #30e040;
}

.glyph {
    font-size: 11px;
    font-family: 'Liberation Sans', sans-serif;
    text-anchor: middle;
}

.xr {
    fill: #1c1c9c;
    text-anchor: start;
}

.cmd {
    font-size: 8px;
    fill: #fff;
    text-anchor: start;
}

.tray {
    margin-left: auto;
    display: flex;
    align-items: center;
    gap: 8px;
    color: #fff;
}

.clock {
    text-align: center;
}

.remote-taskbar .clock {
    width: 64px;
    margin-left: 6px;
    font-size: 11px;
    line-height: 17px;
    text-shadow: 0 0 2px #33435a;
}

.show {
    align-self: stretch;
    width: 15px;
    border: 1px solid #2c3c54;
    background: linear-gradient(160deg, #98a8ba, #4e5f74 40%, #8a9bb0);
}

/* Local taskbar */
.taskbar {
    position: relative;
    height: 48px;
    display: flex;
    border-top: 1px solid #0c1c40;
    box-shadow: inset 0 1px 0 #6c86ba;
    background: linear-gradient(90deg, #1c3266 0, #1c3468 60px, #21418a 90px, #21418a 45%, #2b5098 65%, #34599c 75%, #2a52a0 84%, #1f3f76 87%, #2a4c84 93%, #1c3c72);
}

.taskbar .start {
    width: 66px;
    margin-right: 4px;
}

.pin {
    width: 70px;
}

.running {
    width: 67px;
    margin-left: 2px;
    border: 1px solid #0c1c40;
    border-right: 5px double #8f9fc8;
    box-shadow: inset 0 0 0 1px #dfe6f6;
    background: linear-gradient(160deg, #c9d2e6, #8fa0c8 60%, #a4b2d4);
}

.taskbar .tray {
    gap: 10px;
}

.taskbar .tray svg:first-child {
    margin-right: 4px;
}

.taskbar .clock {
    width: 82px;
    margin-left: 10px;
    font-size: 14px;
    line-height: 22px;
}

.taskbar .show {
    border-color: #6c86ba;
    background: linear-gradient(160deg, #5c74a4, #1c3464 40%, #24448c);
}

.pointer {
    position: absolute;
    left: 1030px;
    top: 358px;
}
```

FILE: script.js
```js
// Small seeded generator so the plots look the same on every load
let seed = 7;
function rnd() {
    seed = (seed * 1664525 + 1013904223) % 4294967296;
    return seed / 4294967296;
}

function gauss() {
    return rnd() + rnd() + rnd() + rnd() - 2;
}

// Colour scale, 0 = bottom of the bar, 1 = top
const ramp = [
    [0, 192, 192, 192],
    [0.13, 48, 48, 255],
    [0.48, 0, 255, 0],
    [0.58, 255, 255, 48],
    [0.70, 255, 176, 0],
    [0.78, 255, 0, 0],
    [1, 144, 0, 176]
];

function colour(t) {
    if (t > 1) return [255, 0, 255];
    if (t < 0) return [0, 0, 0];
    for (let i = 1; i < ramp.length; i++) {
        const a = ramp[i - 1];
        const b = ramp[i];
        if (t <= b[0]) {
            const f = (t - a[0]) / (b[0] - a[0]);
            return [1, 2, 3].map(k => a[k] + (b[k] - a[k]) * f);
        }
    }
}

function drawMap(id, value) {
    const canvas = document.getElementById(id);
    const ctx = canvas.getContext('2d');
    const w = canvas.width;
    const h = canvas.height;
    const img = ctx.createImageData(w, h);
    for (let y = 0; y < h; y++) {
        const range = 5000 * (1 - y / (h - 1));
        for (let x = 0; x < w; x++) {
            const c = colour(value(x, y, range));
            const i = (y * w + x) * 4;
            img.data[i] = c[0];
            img.data[i + 1] = c[1];
            img.data[i + 2] = c[2];
            img.data[i + 3] = 255;
        }
    }
    ctx.putImageData(img, 0, 0);
}

// Linear interpolation in a list of [x, y] points
function lerp(points, x) {
    for (let i = 1; i < points.length; i++) {
        if (x <= points[i][0]) {
            const a = points[i - 1];
            const b = points[i];
            return a[1] + (b[1] - a[1]) * (x - a[0]) / (b[0] - a[0]);
        }
    }
    return points[points.length - 1][1];
}

// Smooth noise on a grid of random values
function makeNoise(sx, sy) {
    const cols = Math.ceil(477 / sx) + 2;
    const rows = Math.ceil(267 / sy) + 2;
    const grid = Array.from({ length: cols * rows }, () => rnd() - 0.5);
    const ease = t => t * t * (3 - 2 * t);
    return (x, y) => {
        const gx = Math.floor(x / sx);
        const gy = Math.floor(y / sy);
        const fx = ease(x / sx - gx);
        const fy = ease(y / sy - gy);
        const i = gy * cols + gx;
        const top = grid[i] + (grid[i + 1] - grid[i]) * fx;
        const low = grid[i + cols] + (grid[i + cols + 1] - grid[i + cols]) * fx;
        return top + (low - top) * fy;
    };
}

// Backscatter: aerosol layer at the bottom, noise with height
const level = [[0, 0.60], [60, 0.63], [250, 0.645], [420, 0.62], [520, 0.585], [640, 0.565], [850, 0.525], [1200, 0.49], [1800, 0.48], [3000, 0.495], [4000, 0.515], [5000, 0.53]];
const spread = [[0, 0.003], [1500, 0.012], [2500, 0.022], [3500, 0.045], [5000, 0.06]];
const holes = [[0, 0], [1800, 0], [2700, 0.005], [3400, 0.025], [4000, 0.06], [4500, 0.13], [5000, 0.19]];
const columnShift = Array.from({ length: 477 }, () => gauss() * 0.005);
drawMap('backscatter', (x, y, range) => {
    if (range < 10) return rnd() < 0.5 ? -1 : 0.45;
    let hole = lerp(holes, range);
    if (range > 4760 && range < 4800) hole = 0.4;
    if (rnd() < hole) return -1;
    return lerp(level, range + x * 0.1 - 20) + columnShift[x] + gauss() * lerp(spread, range);
});

// Doppler: turbulence below 2 km, mostly noise above 3 km
const blobs = [
    [44, 165, 8, 7, 0.22], [80, 152, 11, 14, 0.15], [108, 147, 17, 12, -0.17], [150, 163, 18, 5, 0.16],
    [178, 164, 13, 6, 0.2], [210, 155, 30, 8, 0.09], [265, 177, 4, 9, 0.15], [264, 157, 10, 5, 0.16], [292, 158, 18, 6, 0.12],
    [310, 202, 8, 7, 0.22], [322, 191, 5, 7, 0.24], [303, 249, 15, 6, 0.18], [335, 240, 22, 18, -0.18],
    [385, 228, 35, 12, -0.14], [456, 236, 14, 14, -0.16], [455, 162, 30, 18, -0.13], [293, 184, 13, 8, -0.13],
    [150, 183, 14, 8, -0.13], [50, 233, 45, 22, 0.07], [100, 210, 28, 8, 0.06], [459, 122, 20, 10, 0.1],
    [185, 208, 30, 10, 0.04], [245, 243, 12, 8, 0.1], [272, 200, 13, 16, 0.08], [60, 148, 60, 14, 0.06],
    [210, 205, 30, 14, -0.1], [170, 240, 40, 16, -0.05], [270, 235, 25, 4, 0.05], [130, 195, 12, 30, -0.05],
    [400, 190, 60, 16, -0.03], [420, 250, 60, 14, -0.04]
];
const big = makeNoise(38, 20);
const mid = makeNoise(13, 7);
const fine = makeNoise(5, 3);
const patch = makeNoise(26, 60);
const tint = makeNoise(20, 50);
const columns = Array.from({ length: 477 }, () => gauss());
const streaks = Array.from({ length: 477 }, () => rnd());
drawMap('doppler', (x, y, range) => {
    if (range < 10) return rnd() < 0.6 ? -1 : 0.45;
    if (range < 2900 && x > 129 && x < 137) {
        if (x === 130) return 0.02;
        if (x === 136) return 0.2;
        if (x > 131 && x < 135) return range < 900 && range > 400 ? 2 : 0.83;
    }
    let v = 0.495 + big(x, y) * 0.05 + mid(x, y) * 0.08 + fine(x, y) * 0.09;
    for (const b of blobs) {
        const dx = (x - b[0]) / b[2];
        const dy = (y - b[1]) / b[3];
        v += b[4] * 0.85 * Math.exp(-(dx * dx + dy * dy) / 1.4);
    }
    v += columns[x] * lerp([[0, 0.004], [1500, 0.008], [2300, 0.03], [3200, 0.06], [5000, 0.06]], range);
    v += gauss() * lerp([[0, 0.006], [1500, 0.015], [2100, 0.04], [2800, 0.09], [3500, 0.13], [5000, 0.15]], range);
    v += tint(x, y) * lerp([[0, 0], [1900, 0], [2800, 0.1], [5000, 0.1]], range);
    v += lerp([[0, 0], [1700, 0.01], [3200, 0.04], [5000, 0.05]], range);
    const noise = lerp([[0, 0], [1900, 0], [2600, 0.05], [3200, 0.2], [3800, 0.5], [4300, 0.85], [5000, 1]], range)
        + (streaks[x] ** 3 - 0.25) * lerp([[0, 0], [1900, 0], [2600, 0.5], [3500, 1.2], [5000, 0.5]], range)
        + patch(x, y) * lerp([[0, 0], [2000, 0], [3000, 0.3], [5000, 0.3]], range);
    if (rnd() < noise) {
        const r = rnd();
        if (r < lerp([[2000, 0.1], [3500, 0.2], [4200, 0.4], [5000, 0.4]], range) + streaks[x] * 0.45) return 2;
        if (r > 0.88) return -1;
        return 0.3 + rnd() * 0.6;
    }
    return Math.max(v, 0.05);
});

// Green grid behind the two scopes
function drawGrid(ctx, w, h, dx, dy) {
    ctx.fillStyle = '#000';
    ctx.fillRect(0, 0, w, h);
    for (const major of [false, true]) {
        ctx.fillStyle = major ? '#0a6410' : '#003004';
        const k = major ? 1 : 8;
        const j = major ? 1 : 5;
        for (let x = 0; x < w; x += dx / k) ctx.fillRect(Math.round(x), 0, 1, h);
        for (let y = 1; y < h; y += dy / j) ctx.fillRect(0, Math.round(y), w, 1);
    }
}

function drawAscope() {
    const canvas = document.getElementById('ascope');
    const ctx = canvas.getContext('2d');
    drawGrid(ctx, canvas.width, canvas.height, 52.2, 24.4);
    ctx.fillStyle = '#ffff20';
    ctx.fillRect(247, 0, 1, canvas.height);
    ctx.fillStyle = '#fff';
    ctx.fillRect(0, 0, 1, canvas.height);
    const curve = [[11, 0], [16, 34], [21, 62], [25, 75], [31, 81], [40, 87], [55, 91], [80, 93], [312, 94]];
    let last = 0;
    for (let x = 11; x < 313; x++) {
        const y = Math.round(lerp(curve, x) + gauss() * (x > 22 ? 3 : 0));
        ctx.fillRect(x, Math.min(last, y), 1, Math.abs(y - last) + 2);
        last = y;
    }
}

function drawVelocity() {
    const canvas = document.getElementById('velocity');
    const ctx = canvas.getContext('2d');
    const h = canvas.height;
    drawGrid(ctx, canvas.width, h, 51.3, 25.5);
    ctx.fillStyle = '#fff';
    const curve = [[0, 60], [2, 47], [5, 54], [9, 48], [14, 48], [20, 55], [30, 53], [35, 64], [42, 62], [52, 62], [60, 56], [68, 56], [74, 49], [80, 54], [90, 55], [100, 56], [309, 56]];
    const size = [[0, 1], [30, 1], [36, 5], [70, 6], [95, 7], [120, 7], [309, 7]];
    const up = [109, 122, 134, 135, 142, 157, 175, 176, 185, 186, 187, 212, 222, 232, 244, 246, 269, 296, 299];
    const tall = { 274: 18, 286: 4, 168: 32, 75: 40, 245: 33 };
    let last = 60;
    for (let x = 0; x < 309; x++) {
        const y = Math.round(lerp(curve, x) + gauss() * lerp(size, x));
        let top = Math.min(last, y);
        let bottom = Math.max(last, y) + 2;
        if (x > 100) {
            top -= Math.round(rnd() * 5);
            bottom += Math.round(5 + rnd() * 8);
        }
        if (up.includes(x)) top = 0;
        if (x in tall) top = tall[x];
        if (x === 1 || x === 78 || (x > 97 && rnd() < 0.5)) bottom = h;
        else if (x > 97 && rnd() < 0.15) bottom = Math.round(70 + rnd() * 30);
        if (x > 128 && x < 138 || x > 147 && x < 155 || x > 210 && x < 220) bottom = h;
        ctx.fillRect(x, top, 1, bottom - top);
        last = y;
    }
}

drawAscope();
drawVelocity();
```
